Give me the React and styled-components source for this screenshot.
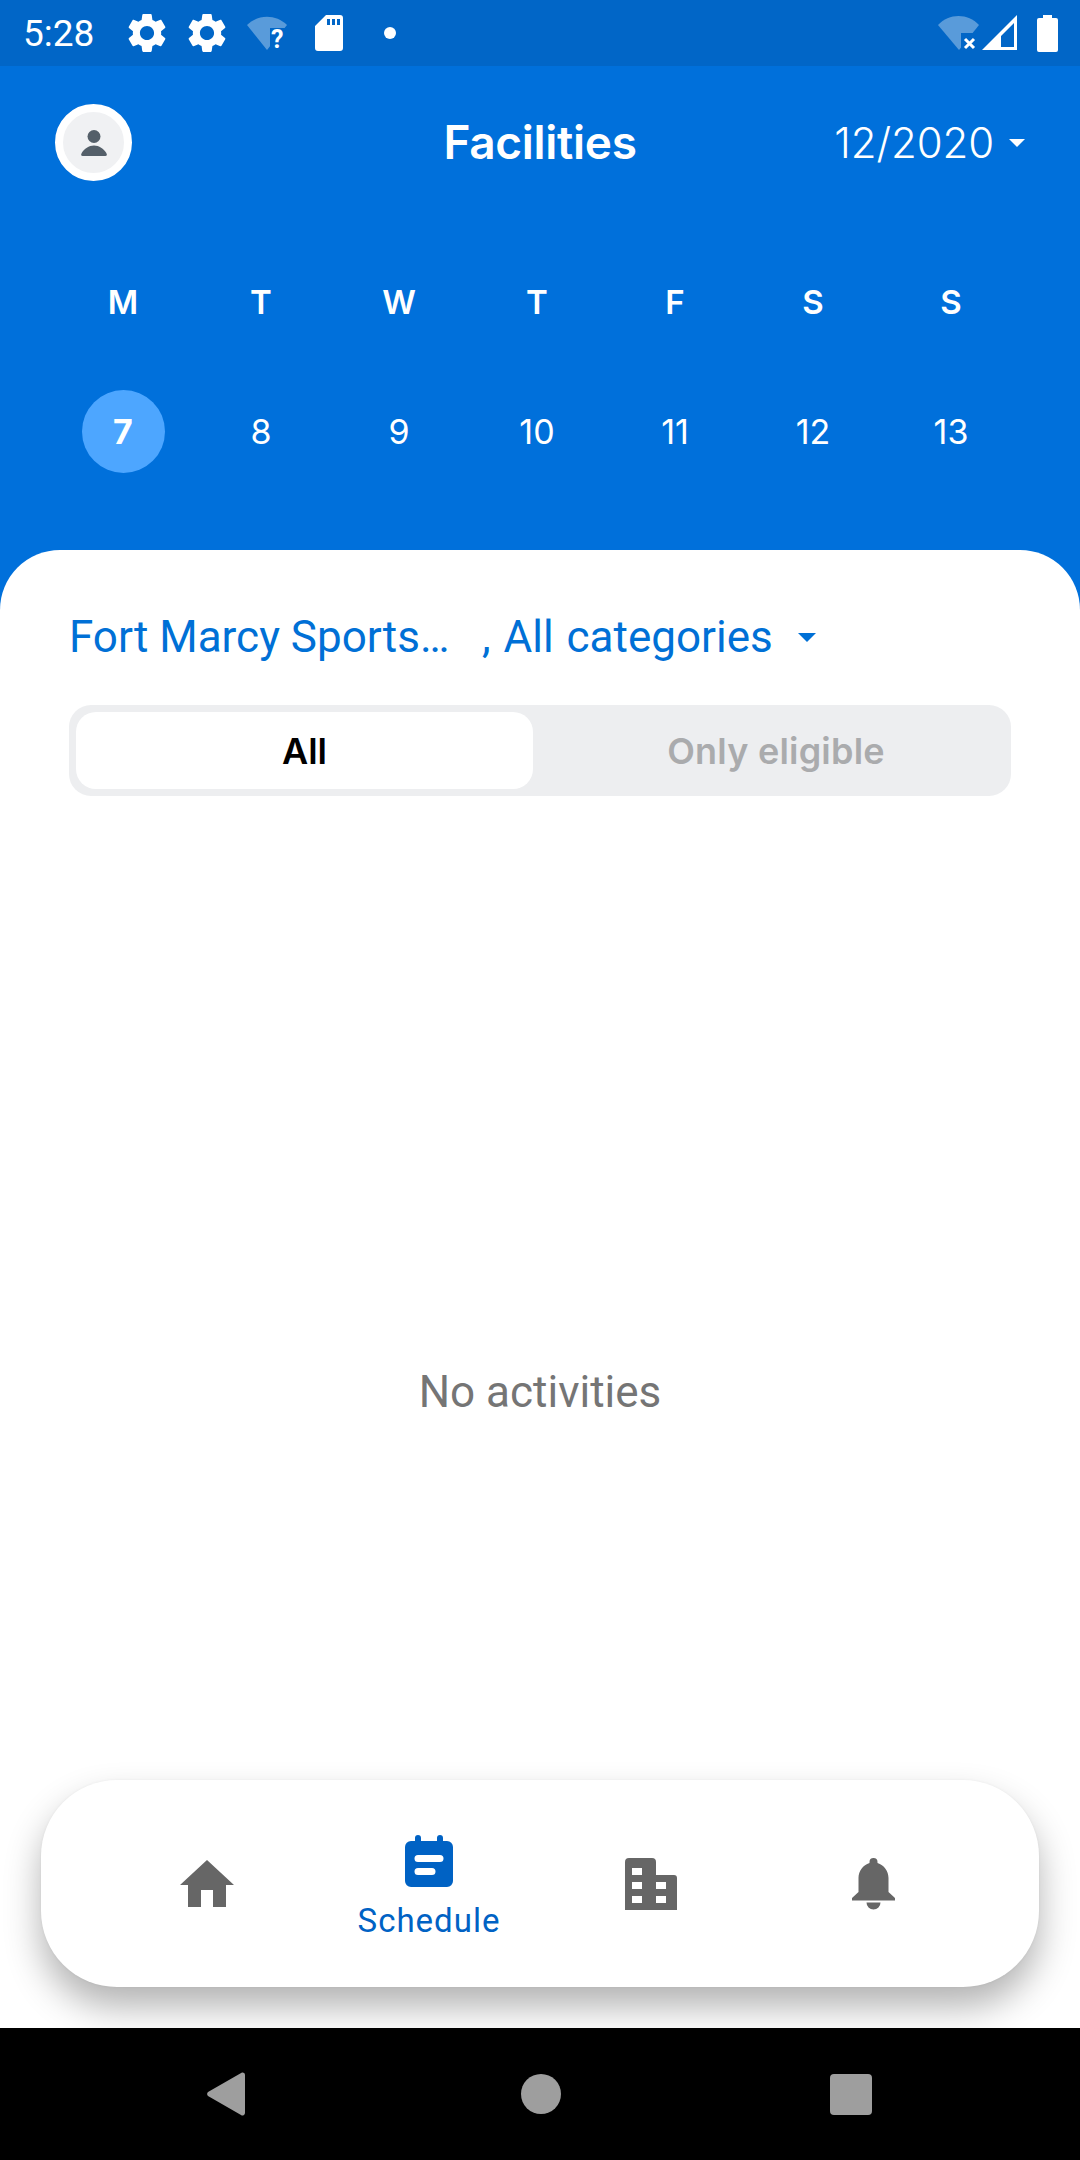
import React from 'react';
import styled, { createGlobalStyle } from 'styled-components';

const GlobalStyle = createGlobalStyle`
  html, body {
    margin: 0;
    padding: 0;
    background: #0070db;
  }
  * {
    box-sizing: border-box;
  }
`;

const Page = styled.div`
  width: 1080px;
  height: 2160px;
  display: flex;
  flex-direction: column;
  overflow: hidden;
  background: #0070db;
`;

const StatusBar = styled.div`
  height: 66px;
  flex: none;
  display: flex;
  align-items: center;
  padding: 0 22px 0 23px;
  background: #0166c7;
  color: #fff;
`;

const Time = styled.span`
  font: 400 37px "Roboto", sans-serif;
  margin-right: 35px;
  width: 72px;
`;

const StatusIcons = styled.div`
  display: flex;
  align-items: center;
  gap: ${(p) => p.$gap || 0}px;
  margin-left: ${(p) => (p.$right ? 'auto' : `${p.$left || 0}px`)};
`;

const WifiBadge = styled.div`
  position: relative;
  width: 40px;
  height: 36px;
`;

const QuestionMark = styled.span`
  position: absolute;
  left: 24px;
  top: 10px;
  font: 700 25px/30px "Roboto", sans-serif;
  color: #fff;
`;

const Dot = styled.span`
  width: 12px;
  height: 12px;
  border-radius: 50%;
  background: #fff;
  margin-left: 41px;
`;

const TopBar = styled.div`
  height: 153px;
  flex: none;
  display: grid;
  grid-template-columns: 1fr auto 1fr;
  align-items: center;
  padding: 0 55px;
  color: #fff;
`;

const Avatar = styled.div`
  width: 77px;
  height: 77px;
  border-radius: 50%;
  background: #f0f1f3;
  border: 8px solid #fff;
  display: flex;
  align-items: center;
  justify-content: center;
`;

const Title = styled.h1`
  margin: 0 0 2px;
  font: 600 46px "Inter", sans-serif;
  letter-spacing: -0.3px;
`;

const MonthPicker = styled.div`
  display: flex;
  align-items: center;
  justify-content: flex-end;
  gap: 15px;
  font: 300 42px "Inter", sans-serif;
  letter-spacing: -0.1px;
`;

const Caret = styled.span`
  width: 0;
  height: 0;
  border-left: ${(p) => p.$size}px solid transparent;
  border-right: ${(p) => p.$size}px solid transparent;
  border-top: ${(p) => p.$size}px solid ${(p) => p.$color};
`;

const WeekGrid = styled.div`
  flex: none;
  height: 331px;
  display: grid;
  grid-template-columns: repeat(7, 138px);
  grid-template-rows: 128px 96px;
  row-gap: 17px;
  align-content: start;
  justify-items: center;
  align-items: center;
  padding: 19px 54px 0;
  color: #fff;
  font-family: "Inter", sans-serif;
`;

const WeekDay = styled.div`
  font-weight: 600;
  font-size: 33px;
`;

const DayNum = styled.div`
  width: 83px;
  height: 83px;
  border-radius: 50%;
  display: flex;
  align-items: center;
  justify-content: center;
  font-size: 34px;
  font-weight: ${(p) => (p.$active ? 700 : 400)};
  background: ${(p) => (p.$active ? '#4da6ff' : 'transparent')};
`;

const Sheet = styled.div`
  flex: 1;
  min-height: 0;
  display: flex;
  flex-direction: column;
  background: #fff;
  border-radius: 60px 60px 0 0;
  padding: 57px 41px 41px;
`;

const FilterRow = styled.div`
  display: flex;
  align-items: center;
  height: 60px;
  padding-left: 28px;
  font: 400 44px "Roboto", sans-serif;
  color: #0070d6;
  white-space: nowrap;
`;

const FilterPlace = styled.span`
  width: 413px;
`;

const FilterCategory = styled.span`
  margin-right: 25px;
  word-spacing: 2px;
`;

const Segments = styled.div`
  margin: 38px 28px 0;
  height: 91px;
  flex: none;
  padding: 7px 0 7px 7px;
  display: grid;
  grid-template-columns: 457px 1fr;
  background: #edeef0;
  border-radius: 22px;
`;

const Segment = styled.div`
  display: flex;
  align-items: center;
  justify-content: center;
  padding-left: ${(p) => (p.$active ? 0 : 8)}px;
  border-radius: 20px;
  font: 600 36px "Inter", sans-serif;
  letter-spacing: ${(p) => (p.$active ? 0 : 0.2)}px;
  background: ${(p) => (p.$active ? '#fff' : 'transparent')};
  color: ${(p) => (p.$active ? '#000' : '#aaabad')};
`;

const EmptyState = styled.div`
  flex: 1;
  display: flex;
  align-items: center;
  justify-content: center;
  padding-top: 208px;
  font: 400 44px "Roboto", sans-serif;
  color: #757575;
`;

const NavCard = styled.div`
  height: 207px;
  flex: none;
  display: grid;
  grid-template-columns: repeat(4, 222px);
  padding: 0 55px;
  background: #fff;
  border-radius: 76px;
  box-shadow: 0 20px 36px rgba(0, 0, 0, 0.3), 0 0 3px rgba(0, 0, 0, 0.05);
`;

const NavItem = styled.div`
  display: flex;
  flex-direction: column;
  align-items: center;
  justify-content: center;
  padding-top: ${(p) => (p.$active ? 8 : 0)}px;
  color: ${(p) => (p.$active ? '#0062c4' : '#666')};
`;

const NavLabel = styled.span`
  margin-top: 14px;
  font: 400 33px "Roboto", sans-serif;
  letter-spacing: 1px;
`;

const SystemBar = styled.div`
  height: 132px;
  flex: none;
  display: grid;
  grid-template-columns: 207px 40px 274px 40px 269px 42px;
  align-items: center;
  background: #000;
`;

const HomeKey = styled.span`
  grid-column: 4;
  height: 40px;
  border-radius: 50%;
  background: #9e9e9e;
`;

const RecentKey = styled.span`
  grid-column: 6;
  height: 41px;
  border-radius: 4px;
  background: #9e9e9e;
`;

const GEAR = 'M19.14 12.94c.04-.3.06-.61.06-.94 0-.32-.02-.64-.07-.94l2.03-1.58c.18-.14.23-.41.12-.61l-1.92-3.32c-.12-.22-.37-.29-.59-.22l-2.39.96c-.5-.38-1.03-.7-1.62-.94l-.36-2.54c-.04-.24-.24-.41-.48-.41h-3.84c-.24 0-.43.17-.47.41l-.36 2.54c-.59.24-1.13.57-1.62.94l-2.39-.96c-.22-.08-.47 0-.59.22L2.74 8.87c-.12.21-.08.47.12.61l2.03 1.58c-.05.3-.09.63-.09.94s.02.64.07.94l-2.03 1.58c-.18.14-.23.41-.12.61l1.92 3.32c.12.22.37.29.59.22l2.39-.96c.5.38 1.03.7 1.62.94l.36 2.54c.05.24.24.41.48.41h3.84c.24 0 .44-.17.47-.41l.36-2.54c.59-.24 1.13-.56 1.62-.94l2.39.96c.22.08.47 0 .59-.22l1.92-3.32c.12-.22.07-.47-.12-.61l-2.01-1.58zM12 15.6c-1.98 0-3.6-1.62-3.6-3.6s1.62-3.6 3.6-3.6 3.6 1.62 3.6 3.6-1.62 3.6-3.6 3.6z';

function GearIcon() {
  return (
    <svg width="42" height="42" viewBox="2.4 2.4 19.2 19.2" style={{ margin: '0 -4px' }}>
      <path d={GEAR} fill="#fff" transform="translate(12 12) scale(.9) translate(-12 -12)" />
    </svg>
  );
}

function WifiQuestionIcon() {
  return (
    <WifiBadge>
      <svg width="40" height="36" viewBox="0 0 40 36" style={{ display: 'block' }}>
        <path d="M0 10C11-1 29-1 40 10L20 35Z" fill="#fff" fillOpacity=".35" />
        <rect x="23" y="13" width="17" height="23" fill="#0166c7" />
      </svg>
      <QuestionMark>?</QuestionMark>
    </WifiBadge>
  );
}

function SdCardIcon() {
  return (
    <svg width="28" height="36" viewBox="0 0 28 36" style={{ marginLeft: 1 }}>
      <path
        d="M11 0H25a3 3 0 0 1 3 3V33a3 3 0 0 1-3 3H3a3 3 0 0 1-3-3V11ZM12 4V10H15V4ZM17 4V10H20V4ZM22 4V10H25V4Z"
        fill="#fff"
        fillRule="evenodd"
      />
    </svg>
  );
}

function WifiOffIcon() {
  return (
    <svg width="41" height="36" viewBox="0 0 41 36">
      <path d="M0 10C11-2 30-2 41 10L21 35Z" fill="#fff" fillOpacity=".35" />
      <rect x="23" y="18" width="18" height="18" fill="#0166c7" />
      <path d="M27 24L36 33M36 24L27 33" stroke="#fff" strokeWidth="3" />
    </svg>
  );
}

function SignalIcon() {
  return (
    <svg width="35" height="36" viewBox="0 0 35 36" style={{ marginLeft: 3 }}>
      <path d="M35 0V35H0ZM32 8L19 21V32H32Z" fill="#fff" fillRule="evenodd" />
    </svg>
  );
}

function BatteryIcon() {
  return (
    <svg width="21" height="37" viewBox="0 0 21 37" style={{ marginLeft: 20 }}>
      <path d="M6 0H15V3H19a2 2 0 0 1 2 2V35a2 2 0 0 1-2 2H2a2 2 0 0 1-2-2V5a2 2 0 0 1 2-2H6Z" fill="#fff" />
    </svg>
  );
}

function PersonIcon() {
  return (
    <svg width="26" height="26" viewBox="0 0 26 26">
      <circle cx="13" cy="6.500" r="6.500" fill="#545f69" />
      <path d="M1.500 26C-.5 26 0 24 1 22.500 3 19 8 15.500 13 15.500S23 19 25 22.500C26 24 26.500 26 24.500 26Z" fill="#545f69" />
    </svg>
  );
}

function HomeIcon() {
  return (
    <svg width="54" height="47" viewBox="0 0 54 47" style={{ display: 'block' }}>
      <path d="M27 0L54 25H46V47H33V30H21V47H8V25H0Z" fill="currentColor" />
    </svg>
  );
}

function CalendarIcon() {
  return (
    <svg width="48" height="52" viewBox="0 0 48 52" style={{ display: 'block' }}>
      <path
        fill="currentColor"
        fillRule="evenodd"
        d="M10 3a3 3 0 0 1 6 0V6H32V3a3 3 0 0 1 6 0V6H42a6 6 0 0 1 6 6V46a6 6 0 0 1-6 6H6a6 6 0 0 1-6-6V12a6 6 0 0 1 6-6H10ZM13 20a3.5 3.5 0 0 0 0 7H35a3.5 3.5 0 0 0 0-7ZM13 33a3.5 3.5 0 0 0 0 7H27a3.5 3.5 0 0 0 0-7Z"
      />
    </svg>
  );
}

function BuildingIcon() {
  return (
    <svg width="52" height="52" viewBox="0 0 52 52" style={{ display: 'block' }}>
      <path
        fill="currentColor"
        fillRule="evenodd"
        d="M4 0H27a4 4 0 0 1 4 4V17H49a3 3 0 0 1 3 3V52H0V4a4 4 0 0 1 4-4ZM7 10V17H17V10ZM7 24V31H17V24ZM7 38V45H17V38ZM31 24V31H41V24ZM31 38V45H41V38Z"
      />
    </svg>
  );
}

function BellIcon() {
  return (
    <svg width="43" height="52" viewBox="0 0 43 52" style={{ display: 'block' }}>
      <path
        fill="currentColor"
        d="M21.500 0a4 4 0 0 1 4 4V5C32 7 36.500 13 36.500 20V34L43 40V42.500H0V40L6.500 34V20C6.500 13 11 7 17.500 5V4a4 4 0 0 1 4-4ZM14.500 44.500H28.500A7 7 0 0 1 14.500 44.500Z"
      />
    </svg>
  );
}

const weekDays = ['M', 'T', 'W', 'T', 'F', 'S', 'S'];
const days = [7, 8, 9, 10, 11, 12, 13];

function App() {
  return (
    <Page>
      <GlobalStyle />
      <StatusBar>
        <Time>5:28</Time>
        <StatusIcons $gap={26}>
          <GearIcon />
          <GearIcon />
        </StatusIcons>
        <StatusIcons $gap={27} $left={23}>
          <WifiQuestionIcon />
          <SdCardIcon />
        </StatusIcons>
        <Dot />
        <StatusIcons $right>
          <WifiOffIcon />
          <SignalIcon />
          <BatteryIcon />
        </StatusIcons>
      </StatusBar>

      <TopBar>
        <Avatar>
          <PersonIcon />
        </Avatar>
        <Title>Facilities</Title>
        <MonthPicker>
          12/2020
          <Caret $size={8} $color="#fff" />
        </MonthPicker>
      </TopBar>

      <WeekGrid>
        {weekDays.map((d, i) => (
          <WeekDay key={i}>{d}</WeekDay>
        ))}
        {days.map((d) => (
          <DayNum key={d} $active={d === 7}>{d}</DayNum>
        ))}
      </WeekGrid>

      <Sheet>
        <FilterRow>
          <FilterPlace>Fort Marcy Sports…</FilterPlace>
          <FilterCategory>, All categories</FilterCategory>
          <Caret $size={9} $color="#0070d6" />
        </FilterRow>
        <Segments>
          <Segment $active>All</Segment>
          <Segment>Only eligible</Segment>
        </Segments>
        <EmptyState>No activities</EmptyState>
        <NavCard>
          <NavItem><HomeIcon /></NavItem>
          <NavItem $active>
            <CalendarIcon />
            <NavLabel>Schedule</NavLabel>
          </NavItem>
          <NavItem><BuildingIcon /></NavItem>
          <NavItem><BellIcon /></NavItem>
        </NavCard>
      </Sheet>

      <SystemBar>
        <svg width="38" height="44" viewBox="0 0 38 44" style={{ gridColumn: 2 }}>
          <path d="M35 0.500a2.500 2.500 0 0 1 3 2.500V41a2.500 2.500 0 0 1-4 2L1 24a3 3 0 0 1 0-4Z" fill="#9e9e9e" />
        </svg>
        <HomeKey />
        <RecentKey />
      </SystemBar>
    </Page>
  );
}

export default App;
